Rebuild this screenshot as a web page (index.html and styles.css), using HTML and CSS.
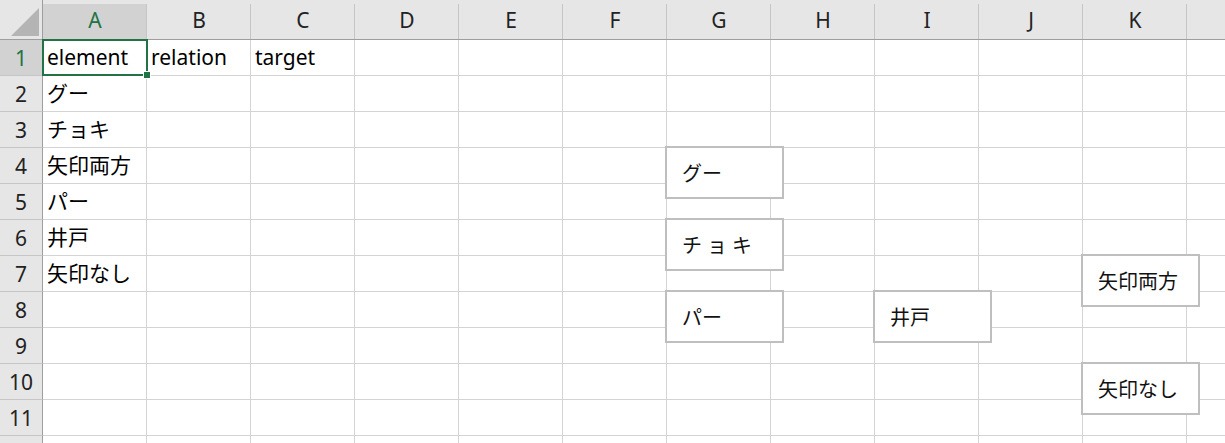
FILE: index.html
```html
<!DOCTYPE html>
<html lang="ja">
<head>
<meta charset="utf-8">
<title>Sheet</title>
<link rel="stylesheet" href="styles.css">
</head>
<body>
<div class="sheet">
  <div class="grid">
    <div class="corner"><span class="tri"></span></div>
    <div class="ch sel">A</div><div class="ch">B</div><div class="ch">C</div><div class="ch">D</div><div class="ch">E</div><div class="ch">F</div><div class="ch">G</div><div class="ch">H</div><div class="ch">I</div><div class="ch">J</div><div class="ch">K</div><div class="ch"></div>

    <div class="rh sel">1</div><div class="c active">element</div><div class="c">relation</div><div class="c">target</div><div class="c"></div><div class="c"></div><div class="c"></div><div class="c"></div><div class="c"></div><div class="c"></div><div class="c"></div><div class="c"></div><div class="c"></div>
    <div class="rh">2</div><div class="c">グー</div><div class="c"></div><div class="c"></div><div class="c"></div><div class="c"></div><div class="c"></div><div class="c"></div><div class="c"></div><div class="c"></div><div class="c"></div><div class="c"></div><div class="c"></div>
    <div class="rh">3</div><div class="c">チョキ</div><div class="c"></div><div class="c"></div><div class="c"></div><div class="c"></div><div class="c"></div><div class="c"></div><div class="c"></div><div class="c"></div><div class="c"></div><div class="c"></div><div class="c"></div>
    <div class="rh">4</div><div class="c">矢印両方</div><div class="c"></div><div class="c"></div><div class="c"></div><div class="c"></div><div class="c"></div><div class="c"></div><div class="c"></div><div class="c"></div><div class="c"></div><div class="c"></div><div class="c"></div>
    <div class="rh">5</div><div class="c">パー</div><div class="c"></div><div class="c"></div><div class="c"></div><div class="c"></div><div class="c"></div><div class="c"></div><div class="c"></div><div class="c"></div><div class="c"></div><div class="c"></div><div class="c"></div>
    <div class="rh">6</div><div class="c">井戸</div><div class="c"></div><div class="c"></div><div class="c"></div><div class="c"></div><div class="c"></div><div class="c"></div><div class="c"></div><div class="c"></div><div class="c"></div><div class="c"></div><div class="c"></div>
    <div class="rh">7</div><div class="c">矢印なし</div><div class="c"></div><div class="c"></div><div class="c"></div><div class="c"></div><div class="c"></div><div class="c"></div><div class="c"></div><div class="c"></div><div class="c"></div><div class="c"></div><div class="c"></div>
    <div class="rh">8</div><div class="c"></div><div class="c"></div><div class="c"></div><div class="c"></div><div class="c"></div><div class="c"></div><div class="c"></div><div class="c"></div><div class="c"></div><div class="c"></div><div class="c"></div><div class="c"></div>
    <div class="rh">9</div><div class="c"></div><div class="c"></div><div class="c"></div><div class="c"></div><div class="c"></div><div class="c"></div><div class="c"></div><div class="c"></div><div class="c"></div><div class="c"></div><div class="c"></div><div class="c"></div>
    <div class="rh">10</div><div class="c"></div><div class="c"></div><div class="c"></div><div class="c"></div><div class="c"></div><div class="c"></div><div class="c"></div><div class="c"></div><div class="c"></div><div class="c"></div><div class="c"></div><div class="c"></div>
    <div class="rh">11</div><div class="c"></div><div class="c"></div><div class="c"></div><div class="c"></div><div class="c"></div><div class="c"></div><div class="c"></div><div class="c"></div><div class="c"></div><div class="c"></div><div class="c"></div><div class="c"></div>
    <div class="rh"></div><div class="c"></div><div class="c"></div><div class="c"></div><div class="c"></div><div class="c"></div><div class="c"></div><div class="c"></div><div class="c"></div><div class="c"></div><div class="c"></div><div class="c"></div><div class="c"></div>
  </div>

  <div class="shape s-gu">グー</div>
  <div class="shape s-choki">チョキ</div>
  <div class="shape s-pa">パー</div>
  <div class="shape s-ido">井戸</div>
  <div class="shape s-both">矢印両方</div>
  <div class="shape s-none">矢印なし</div>
</div>
</body>
</html>
```

FILE: styles.css
```css
html, body {
  margin: 0;
  padding: 0;
  background: #ffffff;
  overflow: hidden;
}

.sheet {
  position: relative;
  width: 1225px;
  height: 443px;
  overflow: hidden;
  font-family: "Noto Sans", "Noto Sans CJK JP", sans-serif;
  font-size: 21px;
  color: #000000;
}

.grid {
  display: grid;
  grid-template-columns: 43px repeat(11, 104px) 104px;
  grid-template-rows: 40px repeat(12, 36px);
  background: #ffffff;
}

.corner {
  background: #e6e6e6;
  border-right: 1px solid #9e9e9e;
  border-bottom: 1px solid #9e9e9e;
  box-sizing: border-box;
  display: flex;
  align-items: flex-end;
  justify-content: flex-end;
  padding: 0 3px 3px 0;
}

.tri {
  width: 28px;
  height: 28px;
  background: #b4b4b4;
  clip-path: polygon(100% 0, 100% 100%, 0 100%);
}

.ch {
  background: #e6e6e6;
  border-bottom: 1px solid #9e9e9e;
  box-sizing: border-box;
  display: flex;
  align-items: center;
  justify-content: center;
  color: #222222;
  font-size: 21px;
  box-shadow: inset -1px 0 0 #c6c6c6;
  position: relative;
}

.ch::before {
  content: "";
  position: absolute;
  left: 0;
  right: 0;
  top: 0;
  height: 4px;
  background: #e6e6e6;
}

.ch.sel {
  background: #d2d2d2;
  color: #217346;
}

.rh {
  background: #e6e6e6;
  border-right: 1px solid #9e9e9e;
  border-bottom: 1px solid #c6c6c6;
  box-sizing: border-box;
  display: flex;
  align-items: center;
  justify-content: center;
  color: #222222;
  font-size: 21px;
  padding-top: 1px;
}

.rh.sel {
  background: #d2d2d2;
  color: #217346;
}

.c {
  border-right: 1px solid #d4d4d4;
  border-bottom: 1px solid #d4d4d4;
  box-sizing: border-box;
  display: flex;
  align-items: center;
  padding: 0 0 0 4px;
  white-space: nowrap;
  line-height: 1;
}

.c.active {
  position: relative;
}

.c.active::after {
  content: "";
  position: absolute;
  left: -1px;
  top: -1px;
  width: 106px;
  height: 37px;
  border: 2px solid #217346;
  box-sizing: border-box;
  pointer-events: none;
}

.c.active::before {
  content: "";
  position: absolute;
  left: 100px;
  top: 31px;
  width: 6px;
  height: 6px;
  background: #217346;
  border: 1px solid #ffffff;
  z-index: 2;
}

.shape {
  position: absolute;
  width: 119px;
  height: 53px;
  box-sizing: border-box;
  border: 2px solid #bfbfbf;
  background: #ffffff;
  display: flex;
  align-items: center;
  padding: 0 0 0 15px;
  font-family: "Noto Sans CJK JP", sans-serif;
  font-size: 20px;
  color: #111111;
  white-space: nowrap;
}

.s-gu { left: 665px; top: 146px; }
.s-choki { left: 665px; top: 218px; letter-spacing: 5px; }
.s-pa { left: 665px; top: 290px; }
.s-ido { left: 873px; top: 290px; }
.s-both { left: 1081px; top: 254px; }
.s-none { left: 1081px; top: 362px; }
```
